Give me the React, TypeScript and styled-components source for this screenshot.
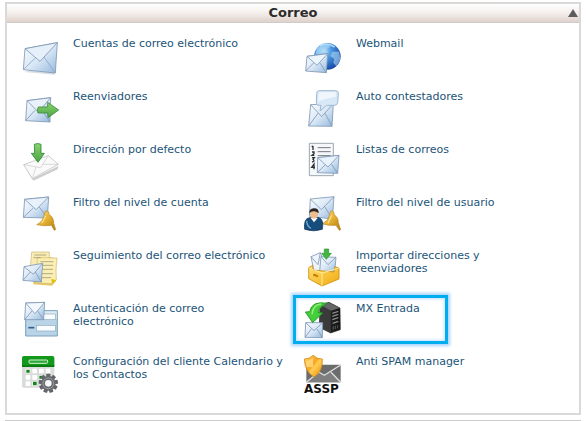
import React from 'react';
import styled, { createGlobalStyle, css } from 'styled-components';

const GlobalStyle = createGlobalStyle`
  body {
    margin: 0;
    background: #fff;
    font-family: "DejaVu Sans", Verdana, sans-serif;
  }
`;

const Page = styled.main`
  padding: 2px 5px 0;
`;

const Panel = styled.section`
  border: 2px solid #d9d9d9;
`;

const PanelHeader = styled.header`
  display: grid;
  grid-template-columns: 12px 1fr 12px;
  align-items: center;
  height: 18px;
  border-bottom: 1px solid #d0cccb;
  background: linear-gradient(#ffffff, #f4efec 50%, #dfd1cb);
`;

const PanelTitle = styled.h2`
  grid-column: 2;
  margin: 0;
  font-size: 13px;
  line-height: 18px;
  text-align: center;
  color: #2b2b2b;
`;

const CollapseButton = styled.button`
  display: flex;
  align-items: center;
  justify-content: center;
  padding: 0;
  border: 0;
  background: none;
  color: #5c5c5c;
  cursor: pointer;
`;

const ItemGrid = styled.ul`
  display: grid;
  grid-template-columns: 36fr 35fr;
  row-gap: 15px;
  margin: 0;
  padding: 14px 0 20px 14px;
  list-style: none;
`;

const Item = styled.li<{ $highlighted?: boolean }>`
  position: relative;
  ${({ $highlighted }) =>
    $highlighted &&
    css`
      &::after {
        content: '';
        position: absolute;
        top: -7px;
        left: -11px;
        box-sizing: border-box;
        width: 155px;
        height: 49px;
        border: 3px solid #00aeef;
        box-shadow: 0 0 3px 2px #a9d3ff, inset 0 0 3px 1px #c4e1ff;
        pointer-events: none;
      }
    `}
`;

const ItemLink = styled.a`
  display: flex;
  align-items: flex-start;
  gap: 14px;
  font-size: 11px;
  line-height: 13px;
  color: #1b5478;
  text-decoration: none;
`;

const ItemIcon = styled.svg`
  flex: none;
  width: 38px;
  height: 38px;
  overflow: visible;
`;

const ItemLabel = styled.span`
  white-space: pre-line;
`;

const NextPanel = styled.section`
  margin-top: 5px;
  height: 2px;
  background: #cbcbcb;
`;

const GradientDefs = styled.svg`
  display: block;
  width: 0;
  height: 0;
`;

const Gradients = () => (
  <GradientDefs aria-hidden="true">
    <defs>
      <linearGradient id="mail" x1="0" y1="0" x2="1" y2="1">
        <stop offset="0" stopColor="#fbfdff" />
        <stop offset="0.5" stopColor="#dae8f6" />
        <stop offset="1" stopColor="#94b8dc" />
      </linearGradient>
      <linearGradient id="green" x1="0" y1="0" x2="0" y2="1">
        <stop offset="0" stopColor="#8bd46f" />
        <stop offset="1" stopColor="#4aa345" />
      </linearGradient>
      <linearGradient id="gold" x1="0" y1="0" x2="1" y2="1">
        <stop offset="0" stopColor="#fbe08a" />
        <stop offset="0.5" stopColor="#e5b02f" />
        <stop offset="1" stopColor="#a87912" />
      </linearGradient>
      <linearGradient id="box" x1="0" y1="0" x2="1" y2="1">
        <stop offset="0" stopColor="#ffe073" />
        <stop offset="1" stopColor="#f0a90c" />
      </linearGradient>
      <linearGradient id="shield" x1="0" y1="0" x2="1" y2="1">
        <stop offset="0" stopColor="#ffd768" />
        <stop offset="0.45" stopColor="#f7a51f" />
        <stop offset="0.55" stopColor="#ffcf52" />
        <stop offset="1" stopColor="#e98407" />
      </linearGradient>
      <linearGradient id="tower" x1="0" y1="0" x2="1" y2="0">
        <stop offset="0" stopColor="#555" />
        <stop offset="0.5" stopColor="#222" />
        <stop offset="1" stopColor="#111" />
      </linearGradient>
      <radialGradient id="globe" cx="0.35" cy="0.3" r="0.75">
        <stop offset="0" stopColor="#b9e6ff" />
        <stop offset="0.4" stopColor="#4b98e0" />
        <stop offset="1" stopColor="#1444a4" />
      </radialGradient>
    </defs>
  </GradientDefs>
);

const edge = { stroke: '#7f98b5', strokeWidth: 2.5, strokeLinejoin: 'round' as const };

const AccountsArt = () => (
  <>
    <path d="M42 126 L136 134 L133 128 L60 122Z" fill="#d7dce2" />
    <path d="M45 56 L142 38 L136 129 L40 119Z" fill="url(#mail)" {...edge} />
    <path d="M40 119 L77 83 M136 129 L101 80" fill="none" {...edge} stroke="#8ba5c4" />
    <path d="M45 56 L90 94 L142 38Z" fill="#e6f0fa" {...edge} />
  </>
);

const ForwardersArt = () => (
  <>
    <path d="M51 212 L122 203 L120 276 L47 272Z" fill="url(#mail)" {...edge} />
    <path d="M47 272 L75 241 M120 276 L94 238" fill="none" {...edge} />
    <path d="M51 212 L85 246 L122 203Z" fill="#e9f2fa" {...edge} />
    <path d="M85 231 L113 231 L113 217 L146 240 L114 263 L113 249 L84 249 Q79 240 85 231Z" fill="url(#green)" stroke="#3d8a3f" strokeWidth="2.5" strokeLinejoin="round" />
  </>
);

const DefaultAddressArt = () => (
  <>
    <path d="M44 112 L68 146 L145 108 L143 118 L70 152Z" fill="#cdcdcd" />
    <path d="M41 104 L115 77 L145 103 L67 146Z" fill="#fafafa" stroke="#b4b4b4" strokeWidth="2" strokeLinejoin="round" />
    <path d="M41 104 L92 113 L115 77 M67 146 L78 111 M145 103 L98 103" fill="none" stroke="#c9c9c9" strokeWidth="2" />
    <path d="M73 43 Q83 38 93 43 L93 70 L103 70 L84 97 L64 70 L74 70Z" fill="url(#green)" stroke="#2e8637" strokeWidth="2.5" strokeLinejoin="round" />
  </>
);

const AccountFilterArt = () => (
  <>
    <path d="M44 208 L116 201 L112 264 L40 262Z" fill="url(#mail)" {...edge} />
    <path d="M40 262 L70 234 M112 264 L87 230" fill="none" {...edge} />
    <path d="M44 208 L78 239 L116 201Z" fill="#e8f1fa" {...edge} />
    <path d="M106 244 Q112 241 116 246 L117 253 Q132 263 131 280 L137 299 L133 301 L124 286 Q104 289 80 284 Q99 275 102 255Z" fill="url(#gold)" stroke="#b98a2a" strokeWidth="2" strokeLinejoin="round" />
    <path d="M107 258 L96 279" fill="none" stroke="#fff0a7" strokeWidth="3" />
  </>
);

const TrackingArt = () => (
  <>
    <path d="M68 42 L137 55 Q133 91 138 123 L126 137 L70 133Z" fill="#e6c765" />
    <path d="M65 36 L118 36 L116 111 L59 107Z" fill="#faedb1" stroke="#c9b378" strokeWidth="2" />
    <path d="M82 53 L141 54 Q136 91 139 120 L126 131 L78 128Z" fill="#fcefb3" stroke="#cfb66a" strokeWidth="2" />
    <path d="M73 45 H109 M70 53 H92 M91 65 H130 M91 76 H129 M92 88 H129 M95 101 H129 M96 113 H124" stroke="#8d8871" strokeWidth="2" />
    <path d="M139 120 L124 117 L126 131Z" fill="#e2c000" />
    <path d="M42 80 L98 70 L94 126 L39 121Z" fill="url(#mail)" {...edge} />
    <path d="M42 80 L70 103 L98 70 M39 121 L61 96 M94 126 L76 96" fill="none" {...edge} />
  </>
);

const AuthenticationArt = () => (
  <>
    <path d="M47 212 L142 212 L142 288 L47 288Z" fill="#b9d4e6" stroke="#7d9fb9" strokeWidth="3" />
    <path d="M49 214 H140 V237 H49Z" fill="#dcebf3" />
    <rect x="79" y="222" width="57" height="17" fill="#f9fdff" stroke="#8aacbe" strokeWidth="2" />
    <rect x="79" y="256" width="57" height="17" fill="#f9fdff" stroke="#8aacbe" strokeWidth="2" />
    <path d="M55 263 H73" stroke="#315f9b" strokeWidth="5" />
    <path d="M47 189 L104 187 L101 239 L44 239Z" fill="url(#mail)" {...edge} />
    <path d="M44 239 L66 213 M101 239 L82 212" fill="none" {...edge} />
    <path d="M47 189 L75 221 L104 187Z" fill="#f2f8fd" {...edge} />
  </>
);

const cells = [
  [47, 86], [67, 86], [87, 86], [107, 86],
  [47, 105], [67, 105], [87, 105],
  [47, 124], [67, 124],
];
const teeth = [0, 40, 80, 120, 160, 200, 240, 280, 320];

const CalendarArt = () => (
  <>
    <rect x="36" y="49" width="97" height="94" rx="5" fill="#d9dcdb" />
    <path d="M36 79 V54 Q36 48 42 48 H127 Q133 48 133 54 V79Z" fill="#12981b" />
    <path d="M36 76 H133 V81 H36Z" fill="#087a12" />
    <rect x="57" y="60" width="56" height="10" rx="3" fill="#2da936" stroke="#d7f1d6" strokeWidth="3" />
    {cells.map(([x, y]) => (
      <rect key={`${x}-${y}`} x={x} y={y} width="14" height="14" rx="2" fill="#fff" />
    ))}
    <path d="M49 89 H59 V98 H49Z M69 125 H80 V136 H69Z M88 107 H100 V116 H88Z" fill="#16831b" />
    {teeth.map((angle) => (
      <rect key={angle} x="109" y="101" width="12" height="14" rx="2" fill="#62666b" transform={`rotate(${angle} 115 130)`} />
    ))}
    <circle cx="115" cy="130" r="16" fill="#fafafa" stroke="#676b70" strokeWidth="12" />
    <circle cx="115" cy="130" r="16" fill="none" stroke="#9b9fa2" strokeWidth="3" />
  </>
);

const WebmailArt = () => (
  <>
    <circle cx="97" cy="79" r="40" fill="url(#globe)" />
    <path d="M65 57 Q80 40 97 42 L107 50 L95 57 L99 69 L87 79 L78 70 L61 76Z M112 65 L132 65 L136 88 L124 109 L115 99 L117 86 L106 78Z" fill="#acd7f4" opacity="0.6" />
    <path d="M74 47 Q97 36 119 51" fill="none" stroke="#bde7ff" strokeWidth="5" opacity="0.8" />
    <path d="M36 79 L98 71 L94 128 L32 123Z" fill="url(#mail)" {...edge} />
    <path d="M32 123 L56 99 M94 128 L75 99" fill="none" {...edge} />
    <path d="M36 79 L66 106 L98 71Z" fill="#edf5fc" {...edge} />
  </>
);

const AutorespondersArt = () => (
  <>
    <path d="M47 224 L115 221 L111 289 L41 288Z" fill="url(#mail)" {...edge} />
    <path d="M47 224 L80 260 L115 221 M41 288 L69 250 M111 289 L90 250" fill="none" {...edge} />
    <path d="M72 182 H122 Q131 182 130 192 L128 217 Q127 226 119 226 H95 L75 243 L78 226 H72 Q63 226 64 217 L65 190 Q66 182 72 182Z" fill="#d9e8f6" stroke="#9eb9d2" strokeWidth="3" />
    <path d="M72 187 H123 L122 200 Q88 206 69 215Z" fill="#f4faff" opacity="0.8" />
  </>
);

const ListsArt = () => (
  <>
    <path d="M43 40 H115 V137 H43Z" fill="#f5f8fb" stroke="#9ca6ae" strokeWidth="3" />
    <path d="M68 53 H107 M68 65 H107 M68 77 H107 M68 90 H107" stroke="#777" strokeWidth="3" />
    <path d="M54 48 V60 M50 50 L54 48 M51 66 H57 V71 L51 76 H58 M51 83 H58 L54 88 Q61 94 51 96 M57 118 V102 L50 112 H60" fill="none" stroke="#333" strokeWidth="4" />
    <path d="M68 83 L132 76 L128 130 L67 128Z" fill="url(#mail)" {...edge} />
    <path d="M67 128 L91 104 M128 130 L110 103" fill="none" {...edge} />
    <path d="M68 83 L99 111 L132 76Z" fill="#e9f3fc" {...edge} />
  </>
);

const UserFilterArt = () => (
  <>
    <path d="M46 207 L117 200 L112 267 L43 259Z" fill="url(#mail)" {...edge} />
    <path d="M46 207 L79 239 L117 200 M112 267 L89 230" fill="none" {...edge} />
    <path d="M107 244 Q112 241 117 247 L117 253 Q132 265 130 278 L137 299 L133 301 L123 286 Q101 288 80 281 Q101 274 103 255Z" fill="url(#gold)" stroke="#b98a2a" strokeWidth="2" />
    <path d="M110 256 L99 280" stroke="#fff0a7" strokeWidth="3" />
    <path d="M29 298 Q25 266 43 263 L72 263 Q87 268 82 298 Q56 307 29 298Z" fill="#164d7d" stroke="#0d2e50" strokeWidth="2" />
    <path d="M47 264 L57 277 L68 264Z" fill="#fff" />
    <path d="M35 272 Q36 290 48 295" fill="none" stroke="#6baed7" strokeWidth="4" />
    <ellipse cx="57" cy="252" rx="12" ry="14" fill="#edbd8d" />
    <path d="M43 250 Q42 236 56 235 Q72 234 71 250 Q64 244 57 244 Q49 243 43 250Z" fill="#2a2420" />
  </>
);

const ImportArt = () => (
  <>
    <path d="M78 50 L106 38 L128 91 L88 99Z" fill="#eef4fb" {...edge} />
    <path d="M108 50 L153 52 L149 96 L104 94Z" fill="url(#mail)" {...edge} />
    <path d="M108 50 L129 74 L153 52" fill="none" {...edge} />
    <path d="M78 50 L99 74 L106 38" fill="none" {...edge} />
    <path d="M71 83 L83 76 L84 90 L147 96 L150 80 L162 84 L162 117 L111 138 L71 116Z" fill="url(#box)" stroke="#d08e0c" strokeWidth="2.5" strokeLinejoin="round" />
    <path d="M71 84 L111 99 L162 84 M111 99 V137" fill="none" stroke="#ffec9b" strokeWidth="3" />
    <rect x="84" y="103" width="16" height="7" rx="3" fill="#c58008" transform="rotate(18 92 106)" />
    <path d="M118 27 H131 V40 H139 L124 58 L110 40 H118Z" fill="#43b83f" stroke="#2e9133" strokeWidth="2" />
  </>
);

const MxEntryArt = () => (
  <>
    <path d="M105 194 L132 187 L165 204 L166 269 L137 279 L103 262Z" fill="url(#tower)" stroke="#333" strokeWidth="2" strokeLinejoin="round" />
    <path d="M105 194 L137 212 L137 278 L103 262Z" fill="#3a3a3a" />
    <path d="M106 194 L132 188 L164 204 L138 212Z" fill="#666" />
    <path d="M142 220 L160 214 M142 229 L160 223 M142 239 L160 233 M143 250 L160 244" stroke="#8a8a8a" strokeWidth="4" />
    <path d="M145 259 V269 M151 257 V267 M158 255 V265" stroke="#777" strokeWidth="2" />
    <path d="M62 248 L113 248 L112 293 L60 292Z" fill="url(#mail)" {...edge} />
    <path d="M62 248 L87 272 L113 248 M60 292 L79 267 M112 293 L96 267" fill="none" {...edge} />
    <path d="M127 190 Q80 181 74 215 L61 216 L83 248 L113 219 L99 217 Q103 200 127 190Z" fill="#43cf3b" stroke="#209021" strokeWidth="2.5" strokeLinejoin="round" />
    <path d="M108 192 Q84 194 81 223" fill="none" stroke="#98ed79" strokeWidth="4" />
  </>
);

const AntiSpamArt = () => (
  <>
    <path d="M34 59 H137 V112 H34Z" fill="#6c6c6c" />
    <path d="M34 112 L72 83 L88 92 L105 82 L137 112Z" fill="#7f7f7f" />
    <path d="M34 60 L88 91 L137 60 M34 112 L69 83 M137 112 L108 82" fill="none" stroke="#dedede" strokeWidth="4" />
    <path d="M28 42 Q43 43 54 31 Q67 43 82 42 Q84 80 57 96 Q29 79 28 42Z" fill="url(#shield)" stroke="#d58919" strokeWidth="2.5" />
    <path d="M34 48 Q47 46 54 39 L54 66 L35 66 Q33 57 34 48Z" fill="#ffe59a" opacity="0.65" />
    <text x="27" y="143" fontFamily="DejaVu Sans, sans-serif" fontWeight="700" fontSize="36" fill="#111">ASSP</text>
  </>
);

type Entry = {
  label: string;
  viewBox: string;
  Art: () => React.JSX.Element;
  highlighted?: boolean;
};

const entries: Entry[] = [
  { label: 'Cuentas de correo electrónico', viewBox: '33 21 114 114', Art: AccountsArt },
  { label: 'Webmail', viewBox: '27 21 114 114', Art: WebmailArt },
  { label: 'Reenviadores', viewBox: '33 180 114 114', Art: ForwardersArt },
  { label: 'Auto contestadores', viewBox: '27 180 114 114', Art: AutorespondersArt },
  { label: 'Dirección por defecto', viewBox: '33 39 114 114', Art: DefaultAddressArt },
  { label: 'Listas de correos', viewBox: '27 39 114 114', Art: ListsArt },
  { label: 'Filtro del nivel de cuenta', viewBox: '33 198 114 114', Art: AccountFilterArt },
  { label: 'Filtro del nivel de usuario', viewBox: '27 198 114 114', Art: UserFilterArt },
  { label: 'Seguimiento del correo electrónico', viewBox: '33 27 114 114', Art: TrackingArt },
  { label: 'Importar direcciones y\nreenviadores', viewBox: '57 27 114 114', Art: ImportArt },
  { label: 'Autenticación de correo\nelectrónico', viewBox: '33 186 114 114', Art: AuthenticationArt },
  { label: 'MX Entrada', viewBox: '57 186 114 114', Art: MxEntryArt, highlighted: true },
  { label: 'Configuración del cliente Calendario y\nlos Contactos', viewBox: '33 45 114 114', Art: CalendarArt },
  { label: 'Anti SPAM manager', viewBox: '27 30 114 114', Art: AntiSpamArt },
];

export default function App() {
  return (
    <>
      <GlobalStyle />
      <Page>
        <Panel aria-labelledby="mail-title">
          <PanelHeader>
            <PanelTitle id="mail-title">Correo</PanelTitle>
            <CollapseButton type="button" aria-label="Contraer Correo">
              <svg width="10" height="8" viewBox="0 0 10 8" aria-hidden="true">
                <path d="M5 0 L10 8 H0Z" fill="currentColor" />
              </svg>
            </CollapseButton>
          </PanelHeader>
          <ItemGrid>
            {entries.map(({ label, viewBox, Art, highlighted }) => (
              <Item key={label} $highlighted={highlighted}>
                <ItemLink href="#">
                  <ItemIcon viewBox={viewBox} aria-hidden="true">
                    <Art />
                  </ItemIcon>
                  <ItemLabel>{label}</ItemLabel>
                </ItemLink>
              </Item>
            ))}
          </ItemGrid>
        </Panel>
        <NextPanel />
      </Page>
      <Gradients />
    </>
  );
}
